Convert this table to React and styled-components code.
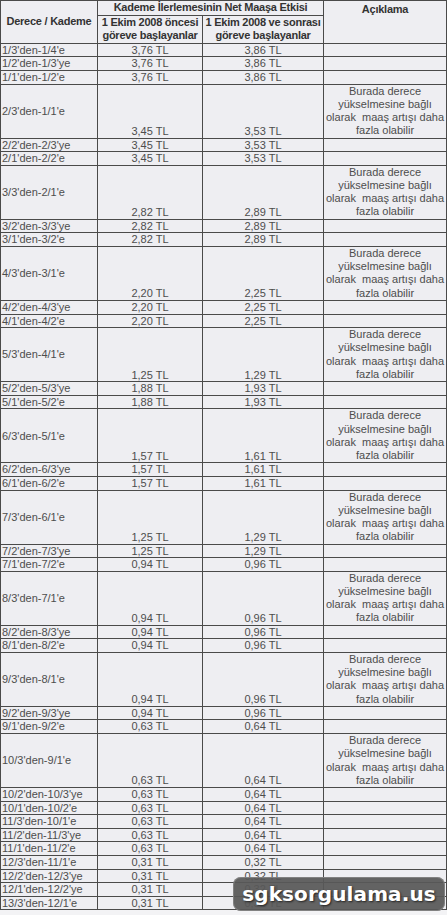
import React from 'react';
import styled, { createGlobalStyle } from 'styled-components';

const GlobalStyle = createGlobalStyle`
    body {
        margin: 0;
        background: #f3f3f5;
        font-family: "Liberation Sans", Arial, sans-serif;
    }
`

const Page = styled.div`
    position: relative;
    width: 447px;
    height: 915px;
    overflow: hidden;
`

const Table = styled.table`
    width: 446px;
    table-layout: fixed;
    border-collapse: collapse;
    border: 1px solid #4a4a4a;
    background: #eeeef2;
    font-size: 11px;
    color: #4d4d4d;
`

const HeadCell = styled.th`
    border: 1px solid #4a4a4a;
    padding: 0;
    font-weight: bold;
    color: #333;
    line-height: 13.6px;
    letter-spacing: -0.25px;
    white-space: nowrap;
    text-align: center;
    vertical-align: ${p => p.$top ? 'top' : 'middle'};
    padding-top: ${p => p.$top ? '2px' : '0'};
`

const Cell = styled.td`
    border: 1px solid #4a4a4a;
    padding: 0 1px;
    line-height: 12.6px;
    white-space: nowrap;
    text-align: ${p => p.$left ? 'left' : 'center'};
    vertical-align: ${p => p.$bottom ? 'bottom' : 'middle'};
`

const NoteCell = styled.td`
    border: 1px solid #4a4a4a;
    padding: 0 1px;
    height: 53px;
    line-height: 13.2px;
    text-align: center;
    vertical-align: middle;
    white-space: pre;
`

const Watermark = styled.div`
    position: absolute;
    left: 233px;
    top: 877px;
    width: 212px;
    height: 34px;
    border-radius: 8px;
    background: rgba(88, 88, 88, 0.93);
    box-shadow: inset 0 0 0 1px rgba(150, 150, 150, 0.6);
    display: flex;
    align-items: center;
    justify-content: center;
    font-family: "DejaVu Sans", Verdana, sans-serif;
    font-weight: bold;
    font-size: 20px;
    color: #fff;
    text-shadow: 1px 1px 2px #222;
    letter-spacing: 0.1px;
`

const rows = [
    ["1/3'den-1/4'e", '3,76', '3,86'],
    ["1/2'den-1/3'ye", '3,76', '3,86'],
    ["1/1'den-1/2'e", '3,76', '3,86'],
    ["2/3'den-1/1'e", '3,45', '3,53', true],
    ["2/2'den-2/3'ye", '3,45', '3,53'],
    ["2/1'den-2/2'e", '3,45', '3,53'],
    ["3/3'den-2/1'e", '2,82', '2,89', true],
    ["3/2'den-3/3'ye", '2,82', '2,89'],
    ["3/1'den-3/2'e", '2,82', '2,89'],
    ["4/3'den-3/1'e", '2,20', '2,25', true],
    ["4/2'den-4/3'ye", '2,20', '2,25'],
    ["4/1'den-4/2'e", '2,20', '2,25'],
    ["5/3'den-4/1'e", '1,25', '1,29', true],
    ["5/2'den-5/3'ye", '1,88', '1,93'],
    ["5/1'den-5/2'e", '1,88', '1,93'],
    ["6/3'den-5/1'e", '1,57', '1,61', true],
    ["6/2'den-6/3'ye", '1,57', '1,61'],
    ["6/1'den-6/2'e", '1,57', '1,61'],
    ["7/3'den-6/1'e", '1,25', '1,29', true],
    ["7/2'den-7/3'ye", '1,25', '1,29'],
    ["7/1'den-7/2'e", '0,94', '0,96'],
    ["8/3'den-7/1'e", '0,94', '0,96', true],
    ["8/2'den-8/3'ye", '0,94', '0,96'],
    ["8/1'den-8/2'e", '0,94', '0,96'],
    ["9/3'den-8/1'e", '0,94', '0,96', true],
    ["9/2'den-9/3'ye", '0,94', '0,96'],
    ["9/1'den-9/2'e", '0,63', '0,64'],
    ["10/3'den-9/1'e", '0,63', '0,64', true],
    ["10/2'den-10/3'ye", '0,63', '0,64'],
    ["10/1'den-10/2'e", '0,63', '0,64'],
    ["11/3'den-10/1'e", '0,63', '0,64'],
    ["11/2'den-11/3'ye", '0,63', '0,64'],
    ["11/1'den-11/2'e", '0,63', '0,64'],
    ["12/3'den-11/1'e", '0,31', '0,32'],
    ["12/2'den-12/3'ye", '0,31', '0,32'],
    ["12/1'den-12/2'ye", '0,31', '0,32'],
    ["13/3'den-12/1'e", '0,31', '0,32'],
]

const note = 'Burada derece\nyükselmesine bağlı\nolarak  maaş artışı daha\nfazla olabilir'

export default function App() {
    return (
        <Page>
            <GlobalStyle />
            <Table>
                <colgroup>
                    <col style={{ width: 97 }} />
                    <col style={{ width: 105 }} />
                    <col style={{ width: 121 }} />
                    <col style={{ width: 123 }} />
                </colgroup>
                <thead>
                    <tr>
                        <HeadCell rowSpan={2}>Derece / Kademe</HeadCell>
                        <HeadCell colSpan={2}>Kademe İlerlemesinin Net Maaşa Etkisi</HeadCell>
                        <HeadCell rowSpan={2} $top>Açıklama</HeadCell>
                    </tr>
                    <tr>
                        <HeadCell>1 Ekim 2008 öncesi<br />göreve başlayanlar</HeadCell>
                        <HeadCell>1 Ekim 2008 ve sonrası<br />göreve başlayanlar</HeadCell>
                    </tr>
                </thead>
                <tbody>
                    {rows.map(([kademe, once, sonra, tall]) => (
                        <tr key={kademe}>
                            <Cell $left>{kademe}</Cell>
                            <Cell $bottom={tall}>{once} TL</Cell>
                            <Cell $bottom={tall}>{sonra} TL</Cell>
                            {tall ? <NoteCell>{note}</NoteCell> : <Cell />}
                        </tr>
                    ))}
                </tbody>
            </Table>
            <Watermark>sgksorgulama.us</Watermark>
        </Page>
    )
}
